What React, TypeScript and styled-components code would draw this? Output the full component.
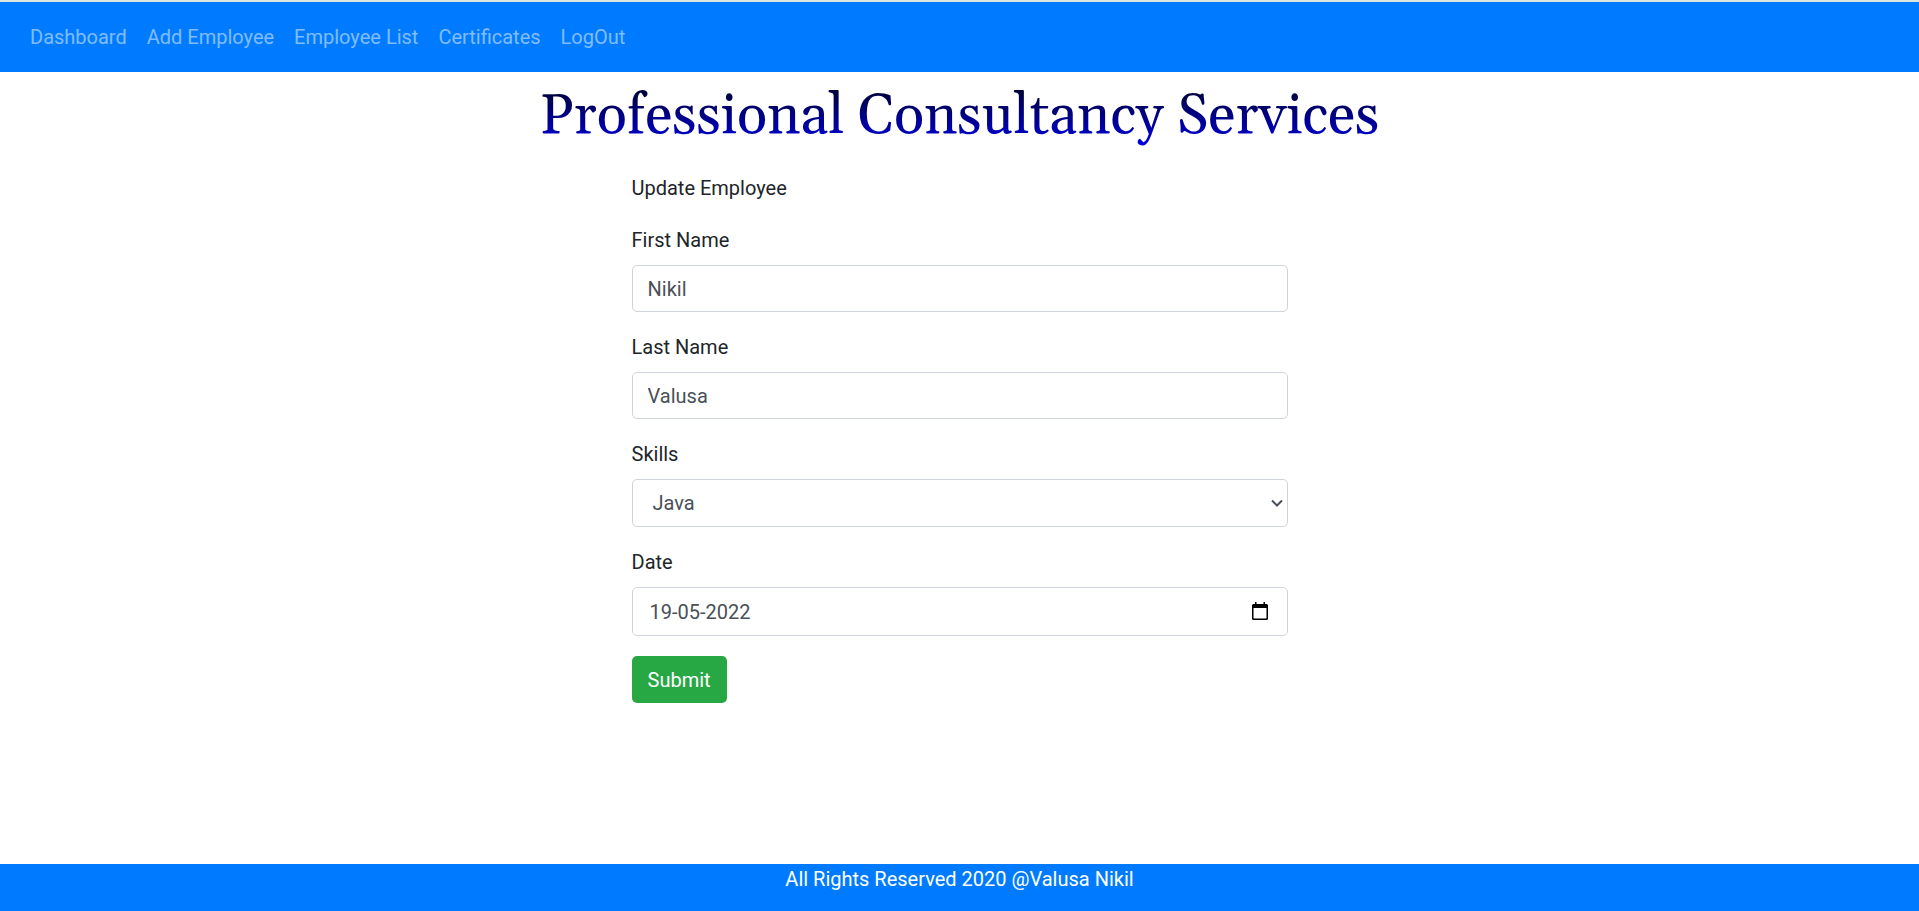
import React from "react";
import styled, { createGlobalStyle } from "styled-components";

const GlobalStyle = createGlobalStyle`
  *, *::before, *::after { box-sizing: border-box; }
  body {
    margin: 0;
    background: #fff;
    color: #212529;
    font-family: Roboto, "Liberation Sans", sans-serif;
    font-size: 20px;
    line-height: 30px;
  }
`;

const Page = styled.div`
  display: flex;
  flex-direction: column;
  min-height: 100vh;
  border-top: 2px solid #dce6de;
`;

const Navbar = styled.nav`
  display: flex;
  padding: 10px 20px;
  background: #007bff;
`;

const NavLink = styled.a`
  padding: 10px;
  color: rgba(255, 255, 255, 0.5);
  text-decoration: none;
  &:hover { color: rgba(255, 255, 255, 0.75); }
`;

const Main = styled.main`
  flex: 1;
  display: flex;
  flex-direction: column;
  align-items: center;
  padding: 0 20px 20px;
`;

const Title = styled.h1`
  margin: 0;
  padding: 12px 0 6px;
  background: linear-gradient(to bottom, #000000, #0000ff);
  background-clip: text;
  -webkit-background-clip: text;
  color: transparent;
  font-family: Georgia, Gelasio, "Liberation Serif", serif;
  font-size: 56px;
  font-weight: 400;
  line-height: 66px;
  text-align: center;
`;

const Form = styled.form`
  display: flex;
  flex-direction: column;
  align-items: flex-start;
  gap: 20px;
  width: 100%;
  max-width: 656px;
  padding-top: 17px;
`;

const FormTitle = styled.p`
  margin: 0 0 2px;
`;

const Field = styled.div`
  display: flex;
  flex-direction: column;
  gap: 10px;
  width: 100%;
`;

const controlStyle = `
  width: 100%;
  border: 1px solid #ced4da;
  border-radius: 5px;
  background-color: #fff;
  color: #495057;
  font: inherit;
`;

const TextInput = styled.input`
  ${controlStyle}
  height: 47px;
  padding: 7px 15px;
`;

const SkillSelect = styled.select`
  ${controlStyle}
  height: 48px;
  padding: 7px 15px 7px 20px;
  appearance: none;
`;

const DateInput = styled.input`
  ${controlStyle}
  height: 49px;
  padding: 7px 50px 7px 17px;
`;

const ControlWrap = styled.div`
  position: relative;
  display: flex;
`;

const Chevron = styled.svg`
  position: absolute;
  top: 18px;
  right: 4px;
  pointer-events: none;
`;

const CalendarButton = styled.button`
  position: absolute;
  top: 14px;
  right: 19px;
  display: flex;
  padding: 0;
  border: 0;
  background: none;
  cursor: pointer;
`;

const SubmitButton = styled.button`
  height: 47px;
  padding: 0 16px;
  border: 0;
  border-radius: 5px;
  background: #28a745;
  color: #fff;
  font: inherit;
  cursor: pointer;
`;

const Footer = styled.footer`
  height: 47px;
  background: #007bff;
  color: #fff;
  text-align: center;
`;

const links = ["Dashboard", "Add Employee", "Employee List", "Certificates", "LogOut"];

export default function App() {
  return (
    <>
      <GlobalStyle />
      <Page>
        <Navbar>
          {links.map((label) => (
            <NavLink key={label} href="#">{label}</NavLink>
          ))}
        </Navbar>
        <Main>
          <Title>Professional Consultancy Services</Title>
          <Form onSubmit={(event) => event.preventDefault()}>
            <FormTitle>Update Employee</FormTitle>
            <Field>
              <label htmlFor="firstName">First Name</label>
              <TextInput id="firstName" type="text" defaultValue="Nikil" />
            </Field>
            <Field>
              <label htmlFor="lastName">Last Name</label>
              <TextInput id="lastName" type="text" defaultValue="Valusa" />
            </Field>
            <Field>
              <label htmlFor="skills">Skills</label>
              <ControlWrap>
                <SkillSelect id="skills" defaultValue="Java">
                  <option>Java</option>
                </SkillSelect>
                <Chevron width="14" height="12" viewBox="0 0 14 12" fill="none" stroke="#495057" strokeWidth="2">
                  <path d="M2 3.5 L7 8.5 L12 3.5" />
                </Chevron>
              </ControlWrap>
            </Field>
            <Field>
              <label htmlFor="date">Date</label>
              <ControlWrap>
                <DateInput id="date" type="text" defaultValue="19-05-2022" />
                <CalendarButton type="button" aria-label="Choose date">
                  <svg width="18" height="20" viewBox="0 0 18 20">
                    <path
                      fill="#000"
                      fillRule="evenodd"
                      d="M4 1h1.500v2h7V1h1.500v2h1.500A1.500 1.500 0 0 1 17 4.500V17.500A1.500 1.500 0 0 1 15.500 19H2.500A1.500 1.500 0 0 1 1 17.500V4.500A1.500 1.500 0 0 1 2.500 3H4ZM2.500 7V17.500H15.500V7Z"
                    />
                  </svg>
                </CalendarButton>
              </ControlWrap>
            </Field>
            <SubmitButton type="submit">Submit</SubmitButton>
          </Form>
        </Main>
        <Footer>All Rights Reserved 2020 @Valusa Nikil</Footer>
      </Page>
    </>
  );
}
